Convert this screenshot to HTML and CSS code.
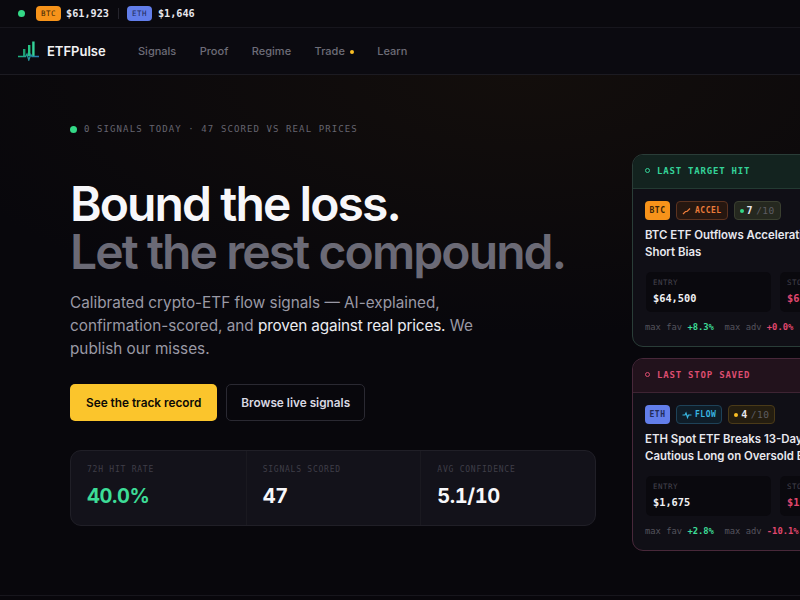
FILE: index.html
```html
<!DOCTYPE html>
<html lang="en">
  <head>
    <meta charset="UTF-8" />
    <meta name="viewport" content="width=device-width, initial-scale=1.0" />
    <title>ETFPulse</title>
    <link rel="stylesheet" href="styles.css">
  </head>
  <body>
    <div class="ticker">
      <span class="live-dot"></span>
      <span class="coin coin-btc">BTC</span>
      <span class="price">$61,923</span>
      <span class="ticker-sep"></span>
      <span class="coin coin-eth">ETH</span>
      <span class="price">$1,646</span>
    </div>

    <nav class="nav">
      <a class="logo" href="#">
        <svg width="22" height="20" viewBox="0 0 22 20" fill="none">
          <defs>
            <linearGradient id="logoLine" x1="0" y1="0" x2="1" y2="0">
              <stop offset="0" stop-color="#1fb57f" />
              <stop offset="1" stop-color="#2a78b8" />
            </linearGradient>
          </defs>
          <rect x="5" y="8" width="2.400" height="7" fill="#1c9c6e" />
          <rect x="10" y="4" width="2.400" height="11" fill="#28c585" />
          <rect x="14.200" y="0.500" width="2.400" height="14.500" fill="#34d399" />
          <path d="M0 15.500H7.500L9 13L10.800 19L12.800 13.500L14 15.500H21" stroke="url(#logoLine)" stroke-width="1.300" />
        </svg>
        <span>ETFPulse</span>
      </a>
      <div class="nav-links">
        <a href="#">Signals</a>
        <a href="#">Proof</a>
        <a href="#">Regime</a>
        <a href="#" class="nav-trade">Trade <i></i></a>
        <a href="#">Learn</a>
      </div>
    </nav>

    <main class="hero">
      <section class="hero-left">
        <div class="eyebrow"><span class="live-dot"></span>0 SIGNALS TODAY · 47 SCORED VS REAL PRICES</div>
        <h1>Bound the loss.<br /><span>Let the rest compound.</span></h1>
        <p class="lead">
          Calibrated crypto-ETF flow signals — AI-explained, confirmation-scored, and
          <strong>proven against real prices.</strong> We publish our misses.
        </p>
        <div class="actions">
          <a href="#" class="btn btn-primary">See the track record</a>
          <a href="#" class="btn btn-ghost">Browse live signals</a>
        </div>
        <div class="stats">
          <div class="stat">
            <div class="stat-label">72H HIT RATE</div>
            <div class="stat-value green">40.0%</div>
          </div>
          <div class="stat">
            <div class="stat-label">SIGNALS SCORED</div>
            <div class="stat-value">47</div>
          </div>
          <div class="stat">
            <div class="stat-label">AVG CONFIDENCE</div>
            <div class="stat-value">5.1/10</div>
          </div>
        </div>
      </section>

      <section class="hero-right">
        <article class="card card-hit">
          <div class="card-head"><i class="ring"></i>LAST TARGET HIT</div>
          <div class="card-body">
            <div class="tags">
              <span class="tag tag-btc">BTC</span>
              <span class="tag tag-accel">
                <svg width="10" height="8" viewBox="0 0 10 8" fill="none"><path d="M1 7L3.500 4.500L5 4.500L8 1.500" stroke="currentColor" stroke-width="1.200" /></svg>
                ACCEL
              </span>
              <span class="tag tag-score tag-score-hit"><i></i><b>7</b> /10</span>
            </div>
            <h3>BTC ETF Outflows Accelerating,<br />Short Bias</h3>
            <div class="levels">
              <div class="level">
                <div class="level-label">ENTRY</div>
                <div class="level-value">$64,500</div>
              </div>
              <div class="level">
                <div class="level-label">STOP</div>
                <div class="level-value red">$66,435</div>
              </div>
            </div>
            <div class="excursion">max fav <b class="green">+8.3%</b>  max adv <b class="red">+0.0%</b></div>
          </div>
        </article>

        <article class="card card-stop">
          <div class="card-head"><i class="ring"></i>LAST STOP SAVED</div>
          <div class="card-body">
            <div class="tags">
              <span class="tag tag-eth">ETH</span>
              <span class="tag tag-flow">
                <svg width="10" height="8" viewBox="0 0 10 8" fill="none"><path d="M0.500 4H3L4 2L5.500 6.500L6.500 4H9.500" stroke="currentColor" stroke-width="1.200" /></svg>
                FLOW
              </span>
              <span class="tag tag-score tag-score-stop"><i></i><b>4</b> /10</span>
            </div>
            <h3>ETH Spot ETF Breaks 13-Day<br />Cautious Long on Oversold Bounce</h3>
            <div class="levels">
              <div class="level">
                <div class="level-label">ENTRY</div>
                <div class="level-value">$1,675</div>
              </div>
              <div class="level">
                <div class="level-label">STOP</div>
                <div class="level-value red">$1,608</div>
              </div>
            </div>
            <div class="excursion">max fav <b class="green">+2.8%</b>  max adv <b class="red">-10.1%</b></div>
          </div>
        </article>
      </section>
    </main>
  </body>
</html>
```

FILE: styles.css
```css
* {
  margin: 0;
  padding: 0;
  box-sizing: border-box;
}

html,
body {
  height: 600px;
  overflow: hidden;
}

body {
  font-family: Inter, "Noto Sans", sans-serif;
  background: #08070c;
  color: #f4f4f7;
}

a {
  text-decoration: none;
  color: inherit;
}

.green {
  color: #3ddc97;
}

.red {
  color: #e0476f;
}

.live-dot {
  width: 7px;
  height: 7px;
  border-radius: 50%;
  background: #34d987;
  flex: none;
}

.ticker {
  height: 28px;
  display: flex;
  align-items: center;
  padding-left: 18px;
  background: #0a090e;
  border-bottom: 1px solid #17161d;
  font-family: "DejaVu Sans Mono", monospace;
}

.coin {
  width: 25px;
  height: 15px;
  margin-left: 11px;
  border-radius: 4px;
  font-size: 7.500px;
  letter-spacing: 0.500px;
  line-height: 15px;
  text-align: center;
  color: #3a2408;
}

.coin-btc {
  background: #f7931a;
}

.coin-eth {
  background: #627eea;
  color: #232c5a;
}

.coin-eth + .price {
  margin-left: 6px;
}

.price {
  margin-left: 5px;
  font-size: 10.200px;
  font-weight: 700;
  color: #e8e8ee;
}

.ticker-sep {
  width: 1px;
  height: 11px;
  margin: 0 -3px 0 9px;
  background: #25242c;
}

.nav {
  height: 47px;
  display: flex;
  align-items: center;
  padding-left: 18px;
  background: #0b0a10;
  border-bottom: 1px solid #1c1b22;
}

.logo {
  display: flex;
  align-items: center;
  gap: 7px;
  width: 120px;
  font-size: 13px;
  font-weight: 600;
  color: #f1f1f4;
}

.nav-links {
  display: flex;
  gap: 23.500px;
  font-size: 11px;
  font-weight: 500;
  color: #6e6d78;
}

.nav-trade i {
  display: inline-block;
  width: 4px;
  height: 4px;
  margin-left: 2px;
  border-radius: 50%;
  background: #fbbf24;
  vertical-align: middle;
}

.hero {
  height: 521px;
  display: grid;
  grid-template-columns: 526px 400px;
  column-gap: 36px;
  padding-left: 70px;
  background: radial-gradient(ellipse 620px 260px at 520px 0, #130e0c 0%, rgba(8, 7, 12, 0) 100%), #08070c;
  border-bottom: 1px solid #17161d;
}

.hero-left {
  padding-top: 49px;
}

.eyebrow {
  display: flex;
  align-items: center;
  gap: 7px;
  font-family: "DejaVu Sans Mono", monospace;
  font-size: 9px;
  letter-spacing: 1.100px;
  color: #666570;
}

h1 {
  margin-top: 46px;
  font-size: 48px;
  line-height: 48px;
  font-weight: 600;
  letter-spacing: -1.900px;
  color: #f7f7fa;
}

h1 span {
  color: #6b6a76;
}

.lead {
  width: 410px;
  margin-top: 15px;
  font-size: 15.300px;
  line-height: 23px;
  color: #9a99a5;
}

.lead strong {
  font-weight: 400;
  letter-spacing: -0.150px;
  color: #ececf1;
}

.actions {
  display: flex;
  gap: 9px;
  margin-top: 24px;
}

.btn {
  height: 37px;
  display: flex;
  align-items: center;
  border-radius: 5px;
  font-size: 11.800px;
  font-weight: 600;
}

.btn-primary {
  padding: 0 16px;
  background: #fbc52c;
  color: #0c0a06;
}

.btn-ghost {
  padding: 0 14px;
  border: 1px solid #2a2932;
  color: #d8d8e2;
}

.stats {
  display: grid;
  grid-template-columns: repeat(3, 1fr);
  height: 76px;
  margin-top: 29px;
  background: #13121a;
  border: 1px solid #201f27;
  border-radius: 11px;
}

.stat {
  padding: 14px 16px 0;
  border-left: 1px solid #1a1920;
}

.stat:first-child {
  border-left: 0;
}

.stat-label {
  font-family: "DejaVu Sans Mono", monospace;
  font-size: 8px;
  letter-spacing: 0.770px;
  color: #3f3e48;
}

.stat-value {
  margin-top: 10px;
  font-size: 20px;
  font-weight: 700;
  letter-spacing: -0.400px;
  font-variant-numeric: tabular-nums;
  color: #f7f7fa;
}

.stat-value.green {
  color: #3ddc97;
}

.hero-right {
  padding-top: 79px;
  display: flex;
  flex-direction: column;
  gap: 11px;
}

.card {
  width: 400px;
  height: 193px;
  background: #100f16;
  border: 1px solid #2a3d38;
  border-radius: 11px;
  overflow: hidden;
}

.card-stop {
  border-color: #48283a;
}

.card-head {
  height: 34px;
  display: flex;
  align-items: center;
  gap: 7px;
  padding: 0 0 2px 12px;
  font-family: "DejaVu Sans Mono", monospace;
  font-size: 9px;
  font-weight: 700;
  letter-spacing: 0.800px;
  color: #34d399;
  background: #13231f;
  border-bottom: 1px solid #233a32;
}

.card-stop .card-head {
  color: #dd4d70;
  background: #22121c;
  border-bottom-color: #3e2433;
}

.ring {
  width: 5px;
  height: 5px;
  border: 1.500px solid currentColor;
  border-radius: 50%;
}

.card-body {
  padding: 12px 12px 0;
}

.tags {
  display: flex;
  gap: 6px;
}

.tag {
  height: 19px;
  display: flex;
  align-items: center;
  gap: 3px;
  padding: 0 3px;
  border-radius: 4px;
  font-family: "DejaVu Sans Mono", monospace;
  font-size: 8px;
  font-weight: 700;
  letter-spacing: 0.500px;
  border: 1px solid transparent;
}

.tag-btc {
  width: 25px;
  justify-content: center;
  background: #f7931a;
  color: #3a2408;
}

.tag-eth {
  width: 25px;
  justify-content: center;
  background: #627eea;
  color: #232c5a;
}

.tag-accel {
  padding: 0 5px;
  color: #ec7c3a;
  background: #261710;
  border-color: #5c3320;
}

.tag-flow {
  padding: 0 5px;
  color: #38b6e0;
  background: #0f1d28;
  border-color: #1e4258;
}

.tag-score {
  padding: 0 5px;
  color: #5d5c63;
  font-size: 9.500px;
  font-weight: 400;
}

.tag-score-hit {
  background: #25281f;
  border-color: #3a3f30;
}

.tag-score-stop {
  background: #241d10;
  border-color: #4a3a18;
}

.tag i {
  width: 4px;
  height: 4px;
  border-radius: 50%;
  background: #34d987;
}

.tag-score-stop i {
  background: #fbbf24;
}

.tag b {
  font-size: 10px;
  color: #e8e8ee;
}

.card h3 {
  margin-top: 7px;
  font-size: 11.400px;
  line-height: 17px;
  font-weight: 600;
  white-space: nowrap;
  color: #e8e8ee;
}

.levels {
  display: flex;
  gap: 9px;
  margin-top: 11px;
  padding-left: 1px;
}

.level {
  width: 125px;
  height: 40px;
  padding: 6px 7px;
  background: #0a090e;
  border-radius: 5px;
}

.level-label {
  font-family: "DejaVu Sans Mono", monospace;
  font-size: 7.500px;
  letter-spacing: 0.500px;
  color: #45444e;
}

.level-value {
  margin-top: 5px;
  font-family: "DejaVu Sans Mono", monospace;
  font-size: 10.300px;
  font-weight: 700;
  color: #f1f1f4;
}

.level-value.red {
  color: #e0476f;
}

.excursion {
  margin-top: 10px;
  font-family: "DejaVu Sans Mono", monospace;
  font-size: 8.800px;
  white-space: pre;
  color: #55545e;
}
```
